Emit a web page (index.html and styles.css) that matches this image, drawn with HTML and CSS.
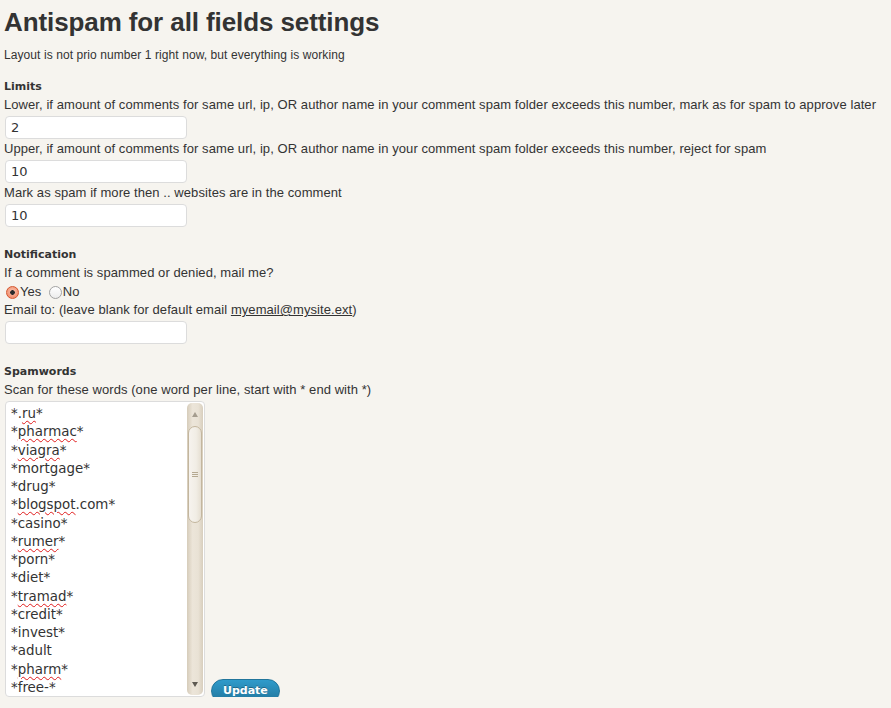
FILE: index.html
```html
<!DOCTYPE html>
<html>
<head>
<meta charset="utf-8">
<title>Antispam for all fields settings</title>
<link rel="stylesheet" href="styles.css">
</head>
<body>
<div class="page">
  <h1 class="title">Antispam for all fields settings</h1>
  <p class="sub">Layout is not prio number 1 right now, but everything is working</p>

  <section class="sec sec-first">
    <h3 class="sec-title">Limits</h3>
    <label class="lbl">Lower, if amount of comments for same url, ip, OR author name in your comment spam folder exceeds this number, mark as for spam to approve later</label>
    <input class="field" type="text" value="2">
    <label class="lbl">Upper, if amount of comments for same url, ip, OR author name in your comment spam folder exceeds this number, reject for spam</label>
    <input class="field" type="text" value="10">
    <label class="lbl">Mark as spam if more then .. websites are in the comment</label>
    <input class="field" type="text" value="10">
  </section>

  <section class="sec">
    <h3 class="sec-title">Notification</h3>
    <div class="lbl">If a comment is spammed or denied, mail me?</div>
    <div class="radios"><input class="radio" type="radio" name="mail" checked>Yes <input class="radio radio-second" type="radio" name="mail">No</div>
    <label class="lbl">Email to: (leave blank for default email <a class="mail" href="#">myemail@mysite.ext</a>)</label>
    <input class="field" type="text" value="">
  </section>

  <section class="sec">
    <h3 class="sec-title">Spamwords</h3>
    <div class="lbl">Scan for these words (one word per line, start with * end with *)</div>
    <div class="ta-row">
      <div class="ta">
        <div class="ta-text">
          <div>*.<span class="sp">ru</span>*</div>
          <div>*<span class="sp">pharmac</span>*</div>
          <div>*<span class="sp">viagra</span>*</div>
          <div>*mortgage*</div>
          <div>*drug*</div>
          <div>*<span class="sp">blogspot</span>.com*</div>
          <div>*casino*</div>
          <div>*<span class="sp">rumer</span>*</div>
          <div>*porn*</div>
          <div>*diet*</div>
          <div>*<span class="sp">tramad</span>*</div>
          <div>*credit*</div>
          <div>*invest*</div>
          <div>*adult</div>
          <div>*<span class="sp">pharm</span>*</div>
          <div>*free-*</div>
        </div>
        <div class="sb">
          <div class="sb-btn sb-up"><span class="tri-up"></span></div>
          <div class="sb-track">
            <div class="sb-thumb"><span class="grip"></span><span class="grip"></span><span class="grip"></span></div>
          </div>
          <div class="sb-btn sb-down"><span class="tri-down"></span></div>
        </div>
      </div>
      <button class="btn-update" type="button">Update</button>
    </div>
  </section>
</div>
</body>
</html>
```

FILE: styles.css
```css
html, body {
  margin: 0;
  padding: 0;
  background: #f6f4ef;
}
body {
  color: #333;
  font-family: "Liberation Sans", Arial, sans-serif;
  font-size: 13px;
}
.page {
  padding: 7px 4px 0;
}
.title {
  margin: 0;
  font-size: 26px;
  line-height: 30px;
  font-weight: bold;
  letter-spacing: -0.1px;
  color: #333;
}
.sub {
  margin: 12px 0 0;
  font-size: 12px;
  line-height: 13px;
  letter-spacing: 0.08px;
}
.sec {
  margin-top: 21px;
}
.sec-first {
  margin-top: 18px;
}
.sec-title {
  margin: 0 0 3px;
  font-family: "DejaVu Sans", sans-serif;
  font-weight: bold;
  font-size: 11px;
  line-height: 13px;
  color: #333;
}
.lbl {
  display: block;
  line-height: 18px;
  letter-spacing: 0.07px;
  white-space: nowrap;
}
.mail {
  color: #333;
  text-decoration: underline;
}
.field {
  display: block;
  box-sizing: border-box;
  width: 182px;
  height: 23px;
  margin: 2px 0 1px 1px;
  padding: 0 5px;
  border: 1px solid #dcdcdc;
  border-radius: 4px;
  background: #fff;
  font-family: "DejaVu Sans", sans-serif;
  font-size: 13px;
  color: #333;
  outline: none;
}
.radios {
  line-height: 19px;
}
.radio {
  -webkit-appearance: none;
  appearance: none;
  display: inline-block;
  box-sizing: border-box;
  width: 13px;
  height: 13px;
  margin: 0 1px 0 2px;
  border-radius: 50%;
  border: 1px solid #a3a3a3;
  background: linear-gradient(#ffffff, #ececec);
  vertical-align: -3px;
}
.radio-second {
  margin-left: 4px;
}
.radio:checked {
  border-color: #d4572f;
  background:
    radial-gradient(circle at 50% 50%, #2b2b2b 0 2px, transparent 2.6px),
    radial-gradient(circle at 50% 40%, #f9c4b0, #ef7d58);
}
.ta-row {
  display: flex;
  align-items: flex-end;
  margin-top: 2px;
}
.ta {
  box-sizing: border-box;
  display: flex;
  width: 200px;
  height: 296px;
  margin-left: 1px;
  border: 1px solid #dcdcdc;
  border-radius: 4px;
  background: #fff;
  overflow: hidden;
  padding-right: 1px;
}
.ta-text {
  flex: 1;
  padding: 3px 0 0 5px;
  font-family: "DejaVu Sans", sans-serif;
  font-size: 13.4px;
  line-height: 18.25px;
  color: #333;
  overflow: hidden;
  white-space: nowrap;
}
.sp {
  text-decoration: underline wavy #e01b1b;
  text-decoration-thickness: 1px;
  text-underline-offset: 2px;
}
.sb {
  display: flex;
  flex-direction: column;
  width: 16px;
  margin: 1px 0;
  border-radius: 5px;
  background: linear-gradient(to right, #d6ccba, #ece5d9 35%, #e9e2d5 70%, #d8cebd);
}
.sb-btn {
  height: 22px;
  display: flex;
  align-items: center;
  justify-content: center;
}
.tri-up {
  width: 0;
  height: 0;
  border-left: 3px solid transparent;
  border-right: 3px solid transparent;
  border-bottom: 5px solid #a59d8f;
}
.tri-down {
  width: 0;
  height: 0;
  border-left: 3px solid transparent;
  border-right: 3px solid transparent;
  border-top: 5px solid #5e5a52;
}
.sb-track {
  flex: 1;
  display: flex;
  flex-direction: column;
  align-items: center;
}
.sb-thumb {
  box-sizing: border-box;
  width: 14px;
  height: 97px;
  margin-top: 1px;
  border: 1px solid #c3b69e;
  border-radius: 7px;
  background: linear-gradient(to right, #f6f3ee, #f1ede5 60%, #e6dfd2);
  display: flex;
  flex-direction: column;
  align-items: center;
  justify-content: center;
  gap: 1px;
}
.grip {
  display: block;
  width: 6px;
  height: 1px;
  background: #b5a991;
}
.btn-update {
  box-sizing: border-box;
  height: 24px;
  margin: 0 0 -6px 6px;
  padding: 0 11px;
  border: 1px solid #21759b;
  border-radius: 12px;
  background: linear-gradient(#2f9bcb, #21759b);
  color: #fff;
  font-family: "DejaVu Sans", sans-serif;
  font-weight: bold;
  font-size: 11px;
  line-height: 22px;
  text-shadow: 0 -1px 0 rgba(0, 0, 0, 0.3);
  cursor: pointer;
}
```
